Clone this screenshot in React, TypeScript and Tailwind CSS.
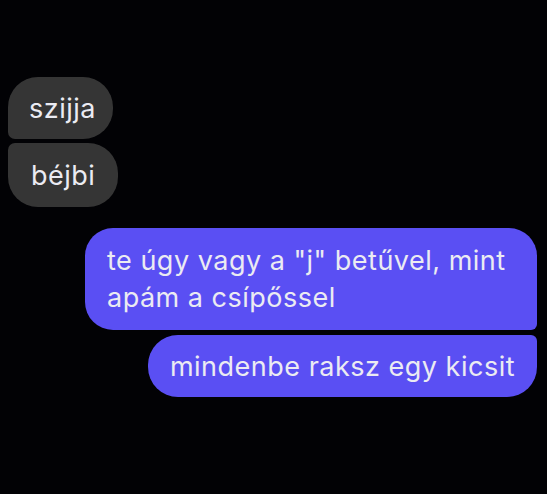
import React from "react";

export default function App() {
  return (
    <div
      className="w-[547px] h-[494px] bg-[#020205] flex flex-col pt-[77px] pl-[8px] pr-[10px] text-[#ebebf2] text-[27px] leading-[37px] tracking-[0.5px]"
      style={{ fontFamily: "Inter, 'Liberation Sans', sans-serif" }}
    >
      <div className="flex flex-col items-start gap-[4px]">
        <div className="bg-[#353535] rounded-[30px] rounded-bl-[7px] w-[105px] h-[62px] pl-[21px] flex items-center">
          szijja
        </div>
        <div className="bg-[#353535] rounded-[30px] rounded-tl-[7px] w-[110px] h-[64px] pl-[23px] flex items-center">
          béjbi
        </div>
      </div>
      <div className="flex flex-col items-end gap-[5px] mt-[21px]">
        <div className="bg-[#5a4ff3] rounded-[28px] rounded-br-[6px] w-[452px] h-[102px] pl-[22px] pr-[16px] flex items-center">
          te úgy vagy a "j" betűvel, mint apám a csípőssel
        </div>
        <div className="bg-[#5a4ff3] rounded-[30px] rounded-tr-[6px] h-[62px] pl-[22px] pr-[22px] flex items-center">
          mindenbe raksz egy kicsit
        </div>
      </div>
    </div>
  );
}
